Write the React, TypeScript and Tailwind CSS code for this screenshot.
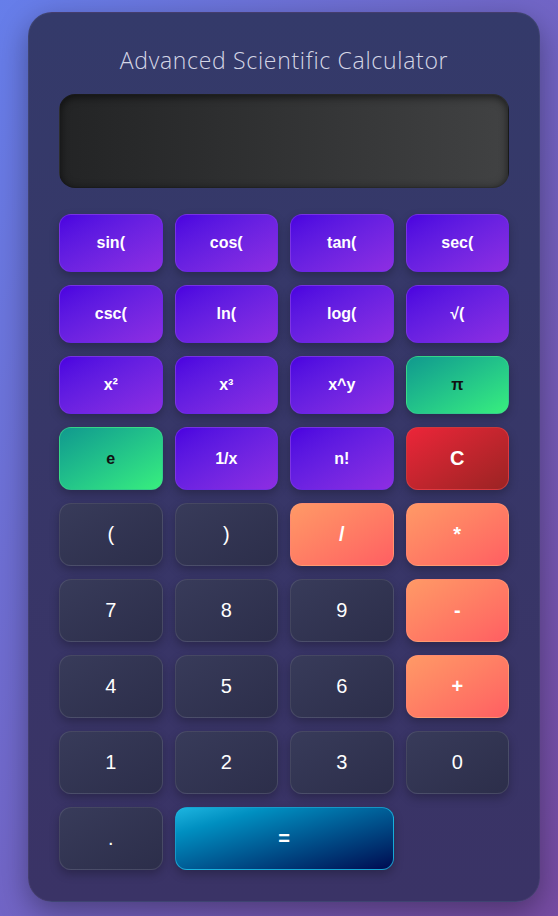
import { useState } from "react";

type Kind = "fn" | "const" | "clear" | "num" | "op" | "eq";

type Key = { label: string; kind: Kind; span?: boolean };

const KEYS: Key[] = [
  { label: "sin(", kind: "fn" },
  { label: "cos(", kind: "fn" },
  { label: "tan(", kind: "fn" },
  { label: "sec(", kind: "fn" },
  { label: "csc(", kind: "fn" },
  { label: "ln(", kind: "fn" },
  { label: "log(", kind: "fn" },
  { label: "√(", kind: "fn" },
  { label: "x²", kind: "fn" },
  { label: "x³", kind: "fn" },
  { label: "x^y", kind: "fn" },
  { label: "π", kind: "const" },
  { label: "e", kind: "const" },
  { label: "1/x", kind: "fn" },
  { label: "n!", kind: "fn" },
  { label: "C", kind: "clear" },
  { label: "(", kind: "num" },
  { label: ")", kind: "num" },
  { label: "/", kind: "op" },
  { label: "*", kind: "op" },
  { label: "7", kind: "num" },
  { label: "8", kind: "num" },
  { label: "9", kind: "num" },
  { label: "-", kind: "op" },
  { label: "4", kind: "num" },
  { label: "5", kind: "num" },
  { label: "6", kind: "num" },
  { label: "+", kind: "op" },
  { label: "1", kind: "num" },
  { label: "2", kind: "num" },
  { label: "3", kind: "num" },
  { label: "0", kind: "num" },
  { label: ".", kind: "num" },
  { label: "=", kind: "eq", span: true },
];

const STYLES: Record<Kind, string> = {
  fn: "bg-gradient-to-br from-[#4a00e0] to-[#8e2de2] text-white font-bold text-base border-[#7b3ae6]/60",
  const: "bg-gradient-to-br from-[#11998e] to-[#38ef7d] text-[#111] font-bold text-base border-[#3fd88a]/60",
  clear: "bg-gradient-to-br from-[#ec2539] to-[#9b2323] text-white font-bold text-xl border-[#e04848]/60",
  num: "bg-gradient-to-br from-[#383b5a] to-[#2c2e4a] text-white text-xl border-white/10",
  op: "bg-gradient-to-br from-[#ff9966] to-[#ff5e62] text-white font-bold text-xl border-[#ffa07a]/50",
  eq: "bg-gradient-to-br from-[#1cb5e0] to-[#000851] text-white font-bold text-xl border-[#1cb5e0]/80",
};

export default function App() {
  const [display, setDisplay] = useState("");

  const press = (k: Key) => {
    if (k.kind === "clear") return setDisplay("");
    if (k.kind === "eq") return;
    setDisplay((d) => d + k.label);
  };

  return (
    <div className="min-h-screen bg-gradient-to-br from-[#667eea] to-[#764ba2] pt-3 pb-4 font-['Liberation_Sans',Arial,sans-serif]">
      <div className="ml-[28px] w-[512px] rounded-[24px] bg-gradient-to-b from-[#343a6a] to-[#3a3366] border border-white/5 px-[30px] pt-[32px] pb-[31px] shadow-[0_10px_30px_rgba(0,0,0,0.35)]">
        <h1 className="text-center text-[23px] font-light tracking-[0.7px] text-[#d4d6e6] font-['Open_Sans','Noto_Sans',sans-serif] leading-[30px] mb-[19px]">
          Advanced Scientific Calculator
        </h1>

        <div className="h-[94px] rounded-[16px] bg-gradient-to-r from-[#232425] to-[#414243] border border-black/30 shadow-[inset_0_2px_8px_rgba(0,0,0,0.6)] mb-[26px] px-5 flex items-center justify-end text-3xl text-white overflow-hidden">
          {display}
        </div>

        <div className="grid grid-cols-4 gap-x-[12px] gap-y-[13px]">
          {KEYS.map((k) => (
            <button
              key={k.label}
              onClick={() => press(k)}
              className={`${STYLES[k.kind]} ${k.span ? "col-span-2" : ""} py-[19px] rounded-[12px] border shadow-[0_4px_10px_rgba(0,0,0,0.25)] leading-[normal]`}
            >
              {k.label}
            </button>
          ))}
        </div>
      </div>
    </div>
  );
}
